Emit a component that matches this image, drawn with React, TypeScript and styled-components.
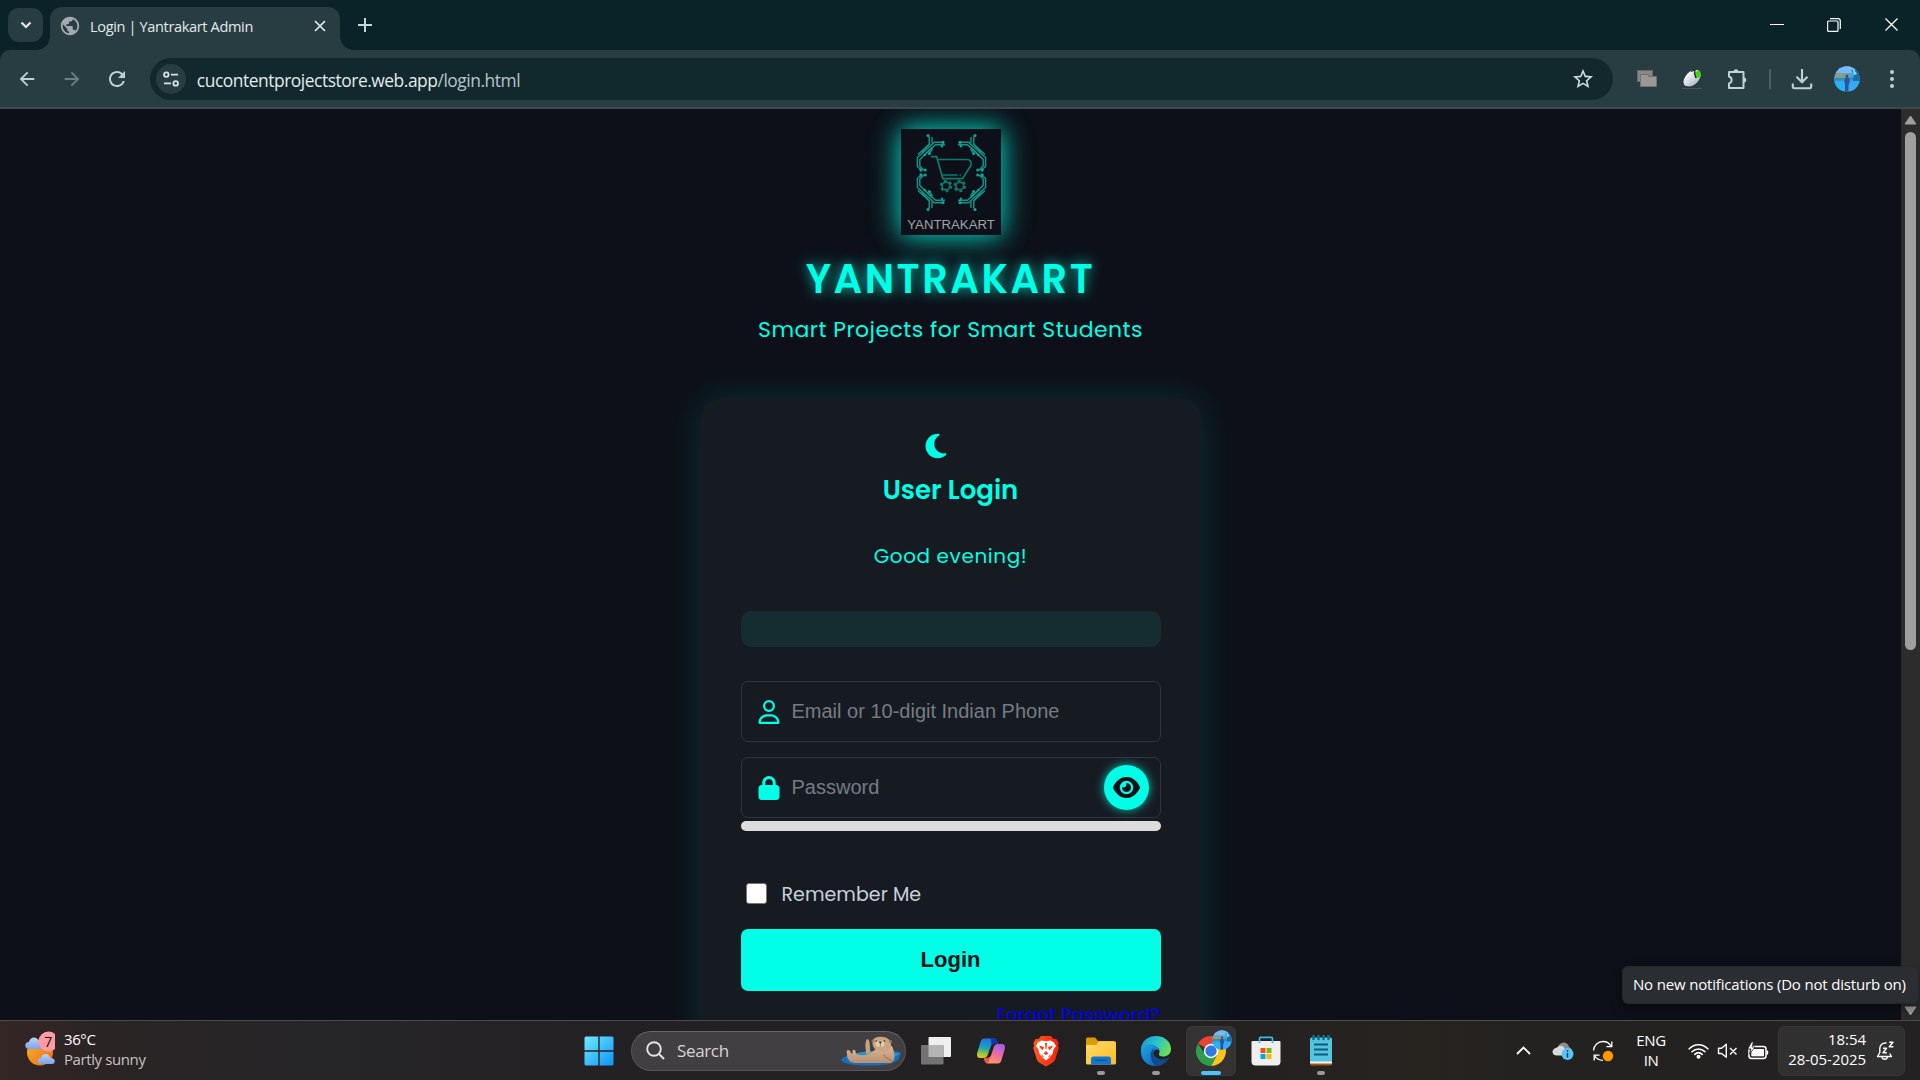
import React from 'react';
import styled, { createGlobalStyle, css } from 'styled-components';
import { FaMoon, FaRegUser, FaLock, FaEye } from 'react-icons/fa6';
import {
  MdArrowBack,
  MdArrowForward,
  MdRefresh,
  MdStarOutline,
  MdPublic,
} from 'react-icons/md';

const neon = '#00ffe7';
const uiFont = '"Segoe UI", "Open Sans", "Noto Sans", sans-serif';
const brandFont = 'Poppins, Inter, "Noto Sans", sans-serif';

const GlobalStyle = createGlobalStyle`
  *, *::before, *::after { box-sizing: border-box; }
  html, body { margin: 0; padding: 0; background: #0d1018; overflow: hidden; }
  svg { display: block; }
`;

const Screen = styled.div`
  width: 1920px;
  height: 1080px;
  display: flex;
  flex-direction: column;
  overflow: hidden;
  font-family: ${uiFont};
  color: #fff;
`;

/* ---------- Browser chrome ---------- */

const TabStrip = styled.header`
  height: 50px;
  flex: none;
  display: flex;
  background: #0a2328;
`;

const TabSearch = styled.button`
  width: 35px;
  height: 34px;
  margin: 8px 7px 0 8px;
  padding: 0;
  border: 0;
  border-radius: 11px;
  background: #283d41;
  display: grid;
  place-items: center;
`;

const Tab = styled.div`
  position: relative;
  width: 290px;
  height: 43px;
  margin-top: 7px;
  padding: 0 14px 6px 9px;
  display: flex;
  align-items: center;
  border-radius: 12px 12px 0 0;
  background: #283d41;

  &::before,
  &::after {
    content: '';
    position: absolute;
    bottom: 0;
    width: 13px;
    height: 13px;
  }
  &::before {
    left: -13px;
    background: radial-gradient(circle at 0 0, transparent 12.5px, #283d41 13px);
  }
  &::after {
    right: -13px;
    background: radial-gradient(circle at 100% 0, transparent 12.5px, #283d41 13px);
  }
`;

const TabTitle = styled.span`
  flex: 1;
  margin-left: 9px;
  font-size: 14.6px;
  letter-spacing: -0.38px;
  line-height: 20px;
  color: #e3e9ea;
  white-space: nowrap;
`;

const NewTab = styled.div`
  margin: 18px 0 0 18px;
`;

const WindowControls = styled.div`
  margin-left: auto;
  display: flex;
`;

const WindowControl = styled.div`
  width: 57px;
  height: 49px;
  padding-right: 1px;
  display: grid;
  place-items: center;
`;

const ToolbarBack = styled.div`
  flex: none;
  background: #0a2328;
`;

const Toolbar = styled.div`
  height: 59px;
  padding-left: 5px;
  padding-right: 6px;
  display: flex;
  align-items: center;
  border-bottom: 2px solid #3e4849;
  border-radius: 10px 10px 0 0;
  background: #283d41;
`;

const NavButton = styled.div<{ $dim?: boolean }>`
  width: 45px;
  height: 42px;
  display: grid;
  place-items: center;
  color: ${(p) => (p.$dim ? '#6c8083' : '#bcd3d5')};
`;

const Omnibox = styled.div`
  width: 1465px;
  height: 42px;
  margin-left: 10px;
  margin-right: 11px;
  padding: 0 18px 0 6px;
  display: flex;
  align-items: center;
  border-radius: 21px;
  background: #11282c;
  color: #d5dcdd;
`;

const SiteInfo = styled.div`
  width: 30px;
  height: 30px;
  border-radius: 50%;
  background: #283d41;
  display: grid;
  place-items: center;
`;

const Url = styled.div`
  flex: 1;
  margin-left: 11px;
  padding-top: 2px;
  font-size: 17.4px;
  letter-spacing: -0.46px;
  line-height: 24px;
  color: #e4ebec;
  white-space: nowrap;
`;

const UrlPath = styled.span`
  color: #b9c6c8;
`;

const Divider = styled.div`
  width: 2px;
  height: 20px;
  margin: 0 8px 0 10px;
  background: #4a5f63;
`;

/* ---------- Page ---------- */

const Viewport = styled.div`
  height: 911px;
  flex: none;
  display: flex;
  overflow: hidden;
  background: #0d1018;
`;

const Page = styled.main`
  flex: 1;
  padding-top: 20px;
  display: flex;
  flex-direction: column;
  align-items: center;
  overflow: hidden;
  font-family: ${brandFont};
`;

const LogoFrame = styled.div`
  width: 100px;
  height: 106px;
  flex: none;
  background: #0d1018;
  box-shadow: 0 0 37px rgba(0, 255, 231, 0.27), 0 0 24px rgba(0, 255, 231, 0.78);
`;

const Brand = styled.h1`
  margin: 14px 0 0;
  font-size: 40px;
  line-height: 61px;
  font-weight: 600;
  letter-spacing: 2.5px;
  color: ${neon};
  text-shadow: 0 0 13px rgba(0, 255, 231, 0.8);
`;

const Tagline = styled.p`
  margin: 3px 0 0;
  font-size: 22px;
  line-height: 33px;
  letter-spacing: 0.44px;
  color: ${neon};
`;

const Card = styled.section`
  width: 500px;
  height: 760px;
  flex: none;
  margin-top: 53px;
  padding: 33px 40px 0;
  display: flex;
  flex-direction: column;
  border-radius: 20px;
  background: #161b22;
  box-shadow: 0 0 38px rgba(0, 255, 231, 0.13);
`;

const MoonRow = styled.div`
  height: 28px;
  padding-left: 181px;
  color: ${neon};
`;

const CardTitle = styled.h2`
  margin: 11px 0 0;
  font-size: 26px;
  line-height: 39px;
  font-weight: 600;
  letter-spacing: 0;
  text-align: center;
  color: ${neon};
`;

const Greeting = styled.p`
  margin: 31px 0 0;
  font-size: 20px;
  line-height: 30px;
  letter-spacing: 0.58px;
  text-align: center;
  color: ${neon};
`;

const Notice = styled.div`
  height: 36px;
  margin-top: 40px;
  border-radius: 10px;
  background: #152c30;
`;

const Field = styled.div<{ $gap: number }>`
  height: 61px;
  flex: none;
  margin-top: ${(p) => p.$gap}px;
  padding: 0 11px 0 15px;
  display: flex;
  align-items: center;
  gap: 11px;
  border: 1px solid #30363d;
  border-radius: 7px;
  color: ${neon};
`;

const Placeholder = styled.span`
  flex: 1;
  font-family: Arial, "Liberation Sans", sans-serif;
  font-size: 20px;
  line-height: 24px;
  color: #767b82;
  padding-bottom: 1px;
`;

const EyeButton = styled.button`
  width: 45px;
  height: 45px;
  flex: none;
  padding: 0;
  border: 0;
  border-radius: 50%;
  display: grid;
  place-items: center;
  color: #0d1117;
  background: ${neon};
  box-shadow: 0 0 10px rgba(0, 255, 231, 0.75);
`;

const Strength = styled.div`
  height: 10px;
  flex: none;
  margin-top: 3px;
  border-radius: 5px;
  background: #dddddd;
`;

const Remember = styled.label`
  height: 28px;
  margin-top: 50px;
  padding-left: 5px;
  display: flex;
  align-items: center;
  font-size: 19px;
  line-height: 28px;
  letter-spacing: 0.04px;
  color: #c9d1d9;
`;

const CheckBox = styled.span`
  width: 21px;
  height: 21px;
  margin-right: 15px;
  margin-bottom: 3px;
  border: 1px solid #767676;
  border-radius: 3px;
  background: #fff;
`;

const LoginButton = styled.button`
  height: 62px;
  flex: none;
  margin-top: 20px;
  padding: 0;
  border: 0;
  border-radius: 7px;
  background: ${neon};
  color: #0d1117;
  font: 700 22px/60px Arial, "Liberation Sans", sans-serif;
`;

const Forgot = styled.a`
  align-self: flex-end;
  margin-top: 10px;
  font-size: 18.6px;
  line-height: 28px;
  color: #0000ee;
`;

const Scrollbar = styled.div`
  width: 19px;
  padding: 6px 0 4px;
  display: flex;
  flex-direction: column;
  align-items: center;
  background: #2c2c2c;
`;

const Thumb = styled.div`
  width: 11px;
  height: 518px;
  margin-top: 7px;
  margin-bottom: auto;
  border-radius: 6px;
  background: #9f9f9f;
`;

/* ---------- Taskbar ---------- */

const Taskbar = styled.footer`
  height: 60px;
  flex: none;
  display: flex;
  align-items: center;
  border-top: 1px solid #4b4a4a;
  background: linear-gradient(90deg, #332625 0, #2a2424 110px, #262527 300px, #232124 620px, #232021 1200px, #27231f 1420px, #232220 1530px, #242122 1920px);
`;

const Weather = styled.div`
  width: 571px;
  padding-left: 25px;
  padding-bottom: 4px;
  display: flex;
  align-items: center;
`;

const WeatherText = styled.div`
  margin-left: 9px;
  display: flex;
  flex-direction: column;
  font-size: 15px;
  line-height: 20px;
  letter-spacing: -0.4px;
`;

const Muted = styled.span`
  color: #c6c3c3;
`;

const Slot = styled.div<{ $w?: number }>`
  position: relative;
  width: ${(p) => p.$w ?? 55}px;
  height: 50px;
  flex: none;
  display: grid;
  place-items: center;
`;

const ActiveTile = styled.div`
  width: 50px;
  height: 50px;
  display: grid;
  place-items: center;
  border: 1px solid #3a3839;
  border-radius: 6px;
  background: #343233;
`;

const Indicator = styled.i<{ $active?: boolean }>`
  position: absolute;
  bottom: 1px;
  left: 50%;
  height: 4px;
  border-radius: 2px;
  ${(p) =>
    p.$active
      ? css`
          width: 20px;
          margin-left: -10px;
          background: #4cc2ff;
        `
      : css`
          width: 8px;
          margin-left: -4px;
          background: #9a9999;
        `}
`;

const SearchBox = styled.div`
  width: 275px;
  height: 40px;
  margin: 0 2px 0 5px;
  padding: 0 4px 0 14px;
  display: flex;
  align-items: center;
  border: 1px solid #575556;
  border-top-color: #676566;
  border-radius: 20px;
  background: #413f41;
`;

const SearchText = styled.span`
  flex: 1;
  margin-left: 12px;
  font-size: 17px;
  letter-spacing: -0.35px;
  line-height: 24px;
  color: #d6d5d5;
`;

const Tray = styled.div`
  margin-left: auto;
  padding-right: 15px;
  display: flex;
  align-items: center;
`;

const Language = styled.div`
  width: 56px;
  padding-bottom: 2px;
  display: flex;
  flex-direction: column;
  align-items: center;
  font-size: 15px;
  line-height: 20px;
  letter-spacing: -0.4px;
`;

const ClockPanel = styled.div`
  width: 127px;
  height: 50px;
  padding-right: 9px;
  display: flex;
  align-items: center;
  justify-content: flex-end;
  gap: 10px;
  border: 1px solid #373536;
  border-radius: 6px;
  background: #313030;
`;

const ClockText = styled.div`
  padding-bottom: 4px;
  display: flex;
  flex-direction: column;
  align-items: flex-end;
  font-size: 15px;
  line-height: 20px;
  letter-spacing: -0.05px;
`;

const Tooltip = styled.div`
  position: absolute;
  left: 1622px;
  top: 966px;
  width: 297px;
  height: 38px;
  padding-left: 10px;
  border: 1px solid #24282d;
  border-radius: 6px;
  background: #2a2d32;
  box-shadow: 0 5px 12px rgba(0, 0, 0, 0.35);
  font-size: 15px;
  line-height: 35px;
  letter-spacing: -0.17px;
  white-space: nowrap;
`;

/* ---------- Drawings ---------- */

const CircuitCorner = () => (
  <g fill="none" strokeWidth="1.4">
    <path d="M43 13.2H33.5L16.4 28.600V37.500L20.500 41.300" />
    <path d="M44 15.800H34.500L18.800 30.500V37L23 41" />
    <path d="M27 6.500L28.200 8.500V15.200L17 25.500" />
    <path d="M31 8V14.500M28.400 15L20.500 23.500M31 18.500L24 25.500M31.500 20L28.500 24" />
    <g fill="#0fa699" stroke="none">
      <circle cx="27" cy="6.500" r="1.500" />
      <circle cx="42" cy="13.400" r="1.600" />
      <circle cx="41" cy="17.300" r="1.200" />
      <circle cx="20" cy="41" r="1.700" />
      <circle cx="24.300" cy="41" r="1.500" />
      <circle cx="28.400" cy="24.600" r="1.500" />
      <circle cx="23.600" cy="26" r="1.300" />
    </g>
  </g>
);

const LogoArt = () => (
  <svg width="100" height="106" viewBox="0 0 100 106">
    <g stroke="#0d9a8d">
      <CircuitCorner />
      <g transform="translate(101 0) scale(-1 1)"><CircuitCorner /></g>
      <g transform="translate(0 87) scale(1 -1)"><CircuitCorner /></g>
      <g transform="translate(101 87) scale(-1 -1)"><CircuitCorner /></g>
    </g>
    <g fill="none" stroke="#0b7b6e" strokeWidth="1.7">
      <path d="M30 27.600H35.600L41.800 49.600H61.500L69.600 37C71.500 33 69 30.500 66 30.500H36.800" />
      <path d="M41.500 46H56.500M58.500 46H60" />
      <circle cx="45" cy="57" r="3.900" />
      <circle cx="58.800" cy="57" r="3.900" />
      <g strokeWidth="2">
        <circle cx="45" cy="57" r="5.300" strokeDasharray="2.900 2.650" />
        <circle cx="58.800" cy="57" r="5.300" strokeDasharray="2.900 2.650" />
      </g>
    </g>
    <text x="6.300" y="99.500" textLength="87.500" lengthAdjust="spacingAndGlyphs" fontFamily="Liberation Sans, Arial, sans-serif" fontSize="13.600" fill="#a0a2a5">
      YANTRAKART
    </text>
  </svg>
);

const TuneIcon = () => (
  <svg width="18" height="18" viewBox="0 0 18 18" fill="none" stroke="#d5e2e3" strokeWidth="1.8">
    <circle cx="4.3" cy="4.6" r="2.3" />
    <path d="M9 4.6H16M2 13.4H9" />
    <circle cx="13.7" cy="13.4" r="2.3" />
  </svg>
);

const LayersIcon = () => (
  <svg width="20" height="18" viewBox="0 0 20 18">
    <path d="M0.5 0.5H15.5V11.5H0.5Z" fill="#8a8686" stroke="#6b6868" />
    <path d="M3.5 7.5V16.5H19.5V6.5H11.5V4.5H3.5Z" fill="#9c9797" stroke="#757070" />
  </svg>
);

const MouseIcon = () => (
  <svg width="22" height="22" viewBox="0 0 22 22">
    <defs>
      <linearGradient id="mouseBody" x1="0" y1="0" x2="1" y2="1">
        <stop offset="0.2" stopColor="#fff" />
        <stop offset="1" stopColor="#93a0ad" />
      </linearGradient>
    </defs>
    <path d="M3 10C6 4 11 1 15 1.3C19 1.6 21 5 20 8.5C18.5 14 13 19 8 19C2.5 19 .5 15 3 10Z" fill="url(#mouseBody)" stroke="#222b2e" />
    <path d="M13 5L17 2.500C20 4 20.500 6.500 19.500 9L15 10Z" fill="#3ed40a" />
    <path d="M10 3.500L14 2L13.500 5.500L15 10" fill="none" stroke="#1b2423" strokeWidth="1.3" />
    <path d="M1 20.500H21" stroke="#42575a" />
  </svg>
);

const PuzzleIcon = () => (
  <svg width="22" height="22" viewBox="0 0 22 22" fill="none" stroke="#bcd3d5" strokeWidth="2" strokeLinejoin="round">
    <path d="M3 4H17.500V20H3V15.500C6.500 14.500 6.500 9.500 3 8.500Z" />
    <path d="M7.500 3.500C7.500 .6 12.500 .6 12.500 3.500ZM18 9.500C21 9.500 21 14.500 18 14.500Z" fill="#bcd3d5" stroke="none" />
  </svg>
);

const DownloadIcon = () => (
  <svg width="22" height="22" viewBox="0 0 22 22" fill="none" stroke="#bcd3d5" strokeWidth="2.1">
    <path d="M11 1V14M5.500 8.800L11 14.300L16.500 8.800M1.800 15.500V19Q1.800 20.300 3.200 20.300H18.800Q20.200 20.300 20.200 19V15.500" />
  </svg>
);

const AvatarArt = ({ size }: { size: number }) => (
  <svg width={size} height={size} viewBox="0 0 26 26">
    <defs>
      <clipPath id={`face${size}`}><circle cx="13" cy="13" r="12.800" /></clipPath>
    </defs>
    <g clipPath={`url(#face${size})`}>
      <path d="M0 0H26V26H0Z" fill="#38a9f4" />
      <path d="M0 0H18V7H0Z" fill="#79baf5" />
      <path d="M1 9L6 6L9 9L13 7L16 10V14H0Z" fill="#8da07c" />
      <path d="M0 12L26 11V14L0 15Z" fill="#2a8fc4" />
      <path d="M17 4L20 8L19 15H26V5Z" fill="#1b6da6" />
      <path d="M18 1L23 8L20 9Z" fill="#9cd5fa" />
      <path d="M0 16L10 17L8 26H0Z" fill="#21b5f1" />
      <path d="M11.500 11.500H14.500L16 15L14.500 19V26H11V18L10 15Z" fill="#2b559a" />
      <circle cx="13" cy="10" r="1.500" fill="#51444b" />
    </g>
  </svg>
);

const WeatherIcon = () => (
  <svg width="30" height="36" viewBox="0 0 30 36">
    <defs>
      <linearGradient id="sun" x1="0" y1="0" x2="1" y2="1">
        <stop offset="0" stopColor="#f6b52c" /><stop offset="1" stopColor="#ee6a10" />
      </linearGradient>
      <linearGradient id="cloud" x1="0" y1="0" x2="0" y2="1">
        <stop offset="0" stopColor="#b9d2fb" /><stop offset="1" stopColor="#7ba2ea" />
      </linearGradient>
    </defs>
    <circle cx="15" cy="21.500" r="13" fill="url(#sun)" />
    <path d="M4 18C-1 18-1 11 4 11C5 5 13 5 14 11L18 18Z" fill="url(#cloud)" />
    <path d="M16 33C11.500 33 12 27 16 27C17 21.500 24.500 22 25 27C31 26.500 31 33 27 33Z" fill="url(#cloud)" />
    <circle cx="23.500" cy="10.500" r="10" fill="#ff99a4" />
    <text x="27.300" y="15.700" textAnchor="end" fontFamily="Open Sans, sans-serif" fontSize="14" fill="#111">7</text>
  </svg>
);

const OverflowIcon = styled.div`
  svg { overflow: visible; }
`;

const WindowsIcon = () => (
  <svg width="30" height="30" viewBox="0 0 30 30">
    <defs>
      <linearGradient id="win" x1="0" y1="0" x2="1" y2="1">
        <stop offset="0" stopColor="#72eafd" /><stop offset="1" stopColor="#0a93f8" />
      </linearGradient>
    </defs>
    <path fill="url(#win)" d="M.5 2Q.5.5 2 .5H14.300V14.300H.5ZM15.700.5H28Q29.500.5 29.500 2V14.300H15.700ZM.5 15.700H14.300V29.500H2Q.5 29.500.5 28ZM15.700 15.700H29.500V28Q29.500 29.500 28 29.500H15.700Z" />
  </svg>
);

const OtterArt = () => (
  <svg width="60" height="30" viewBox="0 0 60 30">
    <defs>
      <linearGradient id="fur" x1="0" y1="0" x2="0" y2="1">
        <stop offset="0" stopColor="#dcb996" /><stop offset="1" stopColor="#b88f71" />
      </linearGradient>
    </defs>
    <path d="M0 24C6 15 50 12 60 17C58 26 52 29.500 30 29.500C12 29.500 3 28 0 24Z" fill="#1270bd" />
    <path d="M5 21C20 13 45 14 59 17.500L50 23H8Z" fill="#2c93c4" />
    <path d="M6 18C4.500 13 8.500 12.500 10 17L11.500 18C10.500 12.500 15 12 15 18C22 20.500 27 19 32 15.500L36 12L51 10C54 17 55 25 50 27H14C9 27 6 23 6 18Z" fill="url(#fur)" />
    <path d="M25.500 18C24.500 13 23.500 6 26 3.200C29.500 2.500 28.500 11 29.500 17Z" fill="#c8a381" />
    <path d="M31.500 7C31.500 2 35 .7 40 .7C45.500 .7 49.500 3.500 50 8C50 13 47 16 41 15.500C35 15 31.500 12 31.500 7Z" fill="#cba581" />
    <circle cx="32" cy="5" r="1.500" fill="#a27e66" /><circle cx="49.500" cy="5.500" r="1.500" fill="#a27e66" />
    <ellipse cx="39" cy="7.800" rx="4.500" ry="3.200" fill="#e6caab" />
    <path d="M37.500 5.500H41L39.300 8Z" fill="#3a2a2d" />
    <circle cx="35.300" cy="5" r=".8" fill="#2b2024" /><circle cx="43.500" cy="5" r=".8" fill="#2b2024" />
    <path d="M39.300 8V10.500M44 18.500C42 19.500 43 21 46 22C48.500 23 50 25 52 26" fill="none" stroke="#8b6a5c" strokeWidth=".9" />
  </svg>
);

const TaskViewIcon = () => (
  <svg width="30" height="30" viewBox="0 0 30 30">
    <rect x="7.500" y="1" width="22.500" height="20" rx="1" fill="#efefef" />
    <rect x="0" y="9" width="22.500" height="19.500" rx="1" fill="#737373" />
    <path d="M7.500 9H22.500V21H7.500Z" fill="#b4b4b4" />
  </svg>
);

const CopilotIcon = () => (
  <svg width="30" height="28" viewBox="0 0 30 28">
    <defs>
      <linearGradient id="coA" x1=".4" y1="0" x2=".2" y2="1">
        <stop offset="0" stopColor="#1c74e8" /><stop offset=".5" stopColor="#21a5b5" /><stop offset=".75" stopColor="#8bc83c" /><stop offset="1" stopColor="#f8c31c" />
      </linearGradient>
      <linearGradient id="coB" x1=".8" y1="0" x2=".3" y2="1">
        <stop offset="0" stopColor="#a55cf0" /><stop offset=".5" stopColor="#ee6aa5" /><stop offset="1" stopColor="#ff9c54" />
      </linearGradient>
    </defs>
    <path d="M8 1.500H18C20 1.500 21 3 21.500 5L22 7H18C16 7 15 8 14.500 10L12 17C11 20 10 21 7 21H4C1 21 .5 18 1.500 15L4.500 5C5.200 2.800 6 1.500 8 1.500Z" fill="url(#coA)" />
    <path d="M22 26.500H12C10 26.500 9 25 8.500 23L8 21H11C13.500 21 14.500 20 15.200 18L17.500 11C18.500 8 19.500 7 22 7H26C29 7 29.500 10 28.500 13L25.500 23C24.800 25.200 24 26.500 22 26.500Z" fill="url(#coB)" />
    <path d="M15 1.500H18C20 1.500 21 3 21.500 5L22 7H18C17 7 16.200 7.500 15.600 8.300Z" fill="#15359c" />
    <path d="M8 21H11C13 21 14 20.300 14.800 19L12 26.500C10 26.500 9 25 8.500 23Z" fill="#ef5350" />
  </svg>
);

const BraveIcon = () => (
  <svg width="28" height="32" viewBox="0 0 28 32">
    <defs>
      <linearGradient id="brave" x1="0" y1="0" x2="1" y2="0">
        <stop offset="0" stopColor="#ff5a1f" /><stop offset="1" stopColor="#f8200c" />
      </linearGradient>
    </defs>
    <path d="M9 1H19L21.500 4L24.500 4L26.500 8L26 11L26.800 13L23 25Q22 27 20 28L14 31.500L8 28Q6 27 5 25L1.200 13L2 11L1.500 8L3.500 4L6.500 4Z" fill="url(#brave)" />
    <path d="M9.500 5.500L14 6.200L18.500 5.500L22 7.500L24 11L21.500 14.500L20.500 19L17.500 22.500L14 25.500L10.500 22.500L7.500 19L6.500 14.500L4 11L6 7.500Z" fill="#fff" />
    <path d="M7 10.500L12 12L11 15L9 14ZM21 10.500L16 12L17 15L19 14ZM14 16L16.500 18.500L14 20L11.500 18.500ZM9 19L12 21.500L10.500 22ZM19 19L16 21.500L17.500 22ZM13 8H15L14.500 14H13.500Z" fill="#f83a18" />
  </svg>
);

const FolderIcon = () => (
  <svg width="30" height="28" viewBox="0 0 30 28">
    <defs>
      <linearGradient id="folder" x1="0" y1="0" x2="1" y2="1">
        <stop offset="0" stopColor="#ffdb6b" /><stop offset="1" stopColor="#fcbb24" />
      </linearGradient>
    </defs>
    <path d="M0 2Q0 .5 1.500.5H9L12 4H28V12H0Z" fill="#dc9a08" />
    <path d="M0 8H10L13 4.200H28.500Q30 4.200 30 5.700V26Q30 27.500 28.500 27.500H1.500Q0 27.500 0 26Z" fill="url(#folder)" />
    <path d="M5 27.500V22Q5 19.500 7.500 19.500H22.500Q25 19.500 25 22V27.500Z" fill="#1277d0" />
    <path d="M9 23.300H21" stroke="#0a4c97" strokeWidth="1.300" />
  </svg>
);

const EdgeIcon = () => (
  <svg width="30" height="30" viewBox="0 0 30 30">
    <defs>
      <linearGradient id="edgeTop" x1="0" y1=".2" x2="1" y2=".6">
        <stop offset="0" stopColor="#1b98d8" /><stop offset=".5" stopColor="#2ac3c9" /><stop offset="1" stopColor="#6fe04f" />
      </linearGradient>
      <linearGradient id="edgeSide" x1="0" y1="0" x2="1" y2="1">
        <stop offset="0" stopColor="#1ba7e3" /><stop offset="1" stopColor="#0b59b8" />
      </linearGradient>
    </defs>
    <path d="M0 14C0 6 6 0 15 0C24 0 30 6 30 13C30 18 26 20.500 22 20.500C19 20.500 17.500 19.500 18 18C20 14 17 10 11 10C5 10 1 13 0 18Z" fill="url(#edgeTop)" />
    <path d="M0 16C0 11 5 8 10 8.500C15 9 18 12 18.500 15C16 12 12 14 12 18C12 24 18 27 24 25C21 28.500 18 30 15 30C6 30 0 24 0 16Z" fill="url(#edgeSide)" />
    <path d="M10.500 15C8 20 11 29.500 16 30C21 30 26 26 28.500 21.500C22 25 14 23.500 12.300 17C11.800 15 12.500 13.500 14 12.500C12.500 12.500 11.300 13.500 10.500 15Z" fill="#114a8c" />
  </svg>
);

const ChromeIcon = () => (
  <OverflowIcon>
    <svg width="30" height="30" viewBox="0 0 30 30">
      <path d="M15 15L2 7.500A15 15 0 0 1 28 7.500Z" fill="#ea4335" />
      <path d="M15 8H28.300A15 15 0 0 1 15 30L21.200 18.500Z" fill="#fcc31e" />
      <path d="M2 7.500L9 18.500L15 22L21.200 18.500L15 30A15 15 0 0 1 2 7.500Z" fill="#2b9f4b" />
      <circle cx="15" cy="15" r="7.200" fill="#fff" />
      <circle cx="15" cy="15" r="5.700" fill="#3578e5" />
      <g transform="translate(16 -6)"><AvatarArt size={20} /></g>
    </svg>
  </OverflowIcon>
);

const StoreIcon = () => (
  <svg width="30" height="30" viewBox="0 0 30 30">
    <path d="M.5 6Q.5 5 1.500 5H28.500Q29.500 5 29.500 6V25.500Q29.500 29.500 25.500 29.500H4.500Q.5 29.500.5 25.500Z" fill="#efefef" />
    <path d="M8.500 7V2.500Q8.500 1.300 9.700 1.300H20.300Q21.500 1.300 21.500 2.500V7" fill="none" stroke="#35bdf0" strokeWidth="1.700" />
    <path d="M9.500 12H14.500V17H9.500Z" fill="#f15022" /><path d="M15.500 12H20.500V17H15.500Z" fill="#7fba00" />
    <path d="M9.500 18H14.500V23H9.500Z" fill="#00a4ef" /><path d="M15.500 18H20.500V23H15.500Z" fill="#ffb901" />
  </svg>
);

const NotepadIcon = () => (
  <svg width="24" height="31" viewBox="0 0 24 31">
    <path d="M1 25H23V29Q23 30.500 21.500 30.500H2.500Q1 30.500 1 29Z" fill="#a6541b" />
    <path d="M1 25H23V28.500H1Z" fill="#f4f4f4" />
    <path d="M1 4Q1 2.500 2.500 2.500H21.500Q23 2.500 23 4V26.500H1Z" fill="#58c3de" />
    <path d="M5 9.500H19M5 14.500H19M5 19.500H19" stroke="#075e7e" strokeWidth="2" />
    <path d="M4.500 1V4M9.500 1V4M14.500 1V4M19.500 1V4" stroke="#0e6d92" strokeWidth="2.600" strokeLinecap="round" />
  </svg>
);

const CloudIcon = () => (
  <svg width="22" height="20" viewBox="0 0 22 20">
    <path d="M6 6C8 0 16 0 17 6Q20 7 20 11H10Z" fill="#8c8c8c" />
    <path d="M5 14.500C-1 14.500-1 7.500 5 6.500C8 3 12 5 13 8L19 12V14.500Z" fill="#d9d9d9" />
    <circle cx="15.500" cy="13" r="6" fill="#55c5fb" />
    <path d="M15.500 12V16.500M15.500 9.300V10.800" stroke="#12324a" strokeWidth="1.400" />
  </svg>
);

const SyncIcon = () => (
  <svg width="22" height="22" viewBox="0 0 22 22" fill="none" stroke="#fff" strokeWidth="1.300">
    <path d="M1.500 10.500C2 5 6 1.500 11 1.500C14.500 1.500 17.500 3.300 19 6.300M19.800 1.500V6.700H14.500" />
    <path d="M2.200 20.500V15.200H7.500M2.500 15.500C4 18.500 7 20.300 11 20.300" />
    <circle cx="16" cy="16" r="5.200" fill="#ff9800" stroke="none" />
  </svg>
);

const WifiIcon = () => (
  <svg width="21" height="16" viewBox="0 0 21 16" fill="none" stroke="#fff" strokeWidth="1.600" strokeLinecap="round">
    <path d="M1.200 5.800C6.500.3 14.500.3 19.800 5.800M4 8.700C7.800 5 13.200 5 17 8.700M6.800 11.400C9 9.300 12 9.300 14.200 11.400" />
    <circle cx="10.500" cy="13.700" r="1.200" fill="#fff" />
  </svg>
);

const MuteIcon = () => (
  <svg width="21" height="16" viewBox="0 0 21 16" fill="none" stroke="#fff" strokeWidth="1.400" strokeLinejoin="round">
    <path d="M1.500 5.200H4.500L9.300 1.200V14.300L4.500 10.500H1.500ZM13 5L19.500 11.500M19.500 5L13 11.500" />
  </svg>
);

const BatteryIcon = () => (
  <svg width="22" height="18" viewBox="0 0 22 18">
    <rect x="2" y="4.500" width="17" height="12" rx="2.500" fill="none" stroke="#fff" strokeWidth="1.500" />
    <path d="M4.300 7H17V14.300H4.300Z" fill="#fff" />
    <path d="M19.500 8Q21.300 8 21.300 10.500T19.500 13Z" fill="#fff" />
    <path d="M4.500 0L.8 7H4L2.500 12L8.200 5H5L6.500 0Z" fill="#fff" stroke="#232122" strokeWidth=".8" />
  </svg>
);

const BellIcon = () => (
  <svg width="19" height="20" viewBox="0 0 19 20" fill="none" stroke="#fff" strokeWidth="1.400" strokeLinejoin="round">
    <path d="M10.500 2C6 1.500 3.800 4.500 3.800 7.500V11.500L1.500 15.500H15.500L13.800 12.500" />
    <path d="M6 16C6.300 19 11 19 11.300 16" />
    <path d="M7 7.300H10.500L7 11.800H10.800M13.200 1.300H17L13.200 5.800H17.300" />
  </svg>
);

/* ---------- Sections ---------- */

const BrowserChrome = () => (
  <>
    <TabStrip>
      <TabSearch>
        <svg width="12" height="8" viewBox="0 0 12 8" fill="none" stroke="#e3e9ea" strokeWidth="2.200">
          <path d="M1.500 1.500L6 6L10.500 1.500" />
        </svg>
      </TabSearch>
      <Tab>
        <MdPublic size={22} color="#a5a8b0" />
        <TabTitle>Login | Yantrakart Admin</TabTitle>
        <svg width="12" height="12" viewBox="0 0 12 12" stroke="#e3e9ea" strokeWidth="1.700">
          <path d="M1 1L11 11M11 1L1 11" />
        </svg>
      </Tab>
      <NewTab>
        <svg width="14" height="14" viewBox="0 0 14 14" stroke="#c3d8da" strokeWidth="2">
          <path d="M7 0V14M0 7H14" />
        </svg>
      </NewTab>
      <WindowControls>
        <WindowControl>
          <svg width="14" height="14" viewBox="0 0 14 14" stroke="#fff"><path d="M0 6.500H14" /></svg>
        </WindowControl>
        <WindowControl>
          <svg width="14" height="14" viewBox="0 0 14 14" fill="none" stroke="#fff" strokeWidth="1.200">
            <rect x=".6" y="3" width="10.400" height="10.400" rx="1" />
            <path d="M3 .7H11Q13.300.7 13.300 3V11" />
          </svg>
        </WindowControl>
        <WindowControl>
          <svg width="13" height="13" viewBox="0 0 13 13" stroke="#fff" strokeWidth="1.300"><path d="M.5.5L12.500 12.500M12.500.5L.5 12.500" /></svg>
        </WindowControl>
      </WindowControls>
    </TabStrip>
    <ToolbarBack>
      <Toolbar>
        <NavButton><MdArrowBack size={22} /></NavButton>
        <NavButton $dim><MdArrowForward size={22} /></NavButton>
        <NavButton><MdRefresh size={24} /></NavButton>
        <Omnibox>
          <SiteInfo><TuneIcon /></SiteInfo>
          <Url>cucontentprojectstore.web.app<UrlPath>/login.html</UrlPath></Url>
          <MdStarOutline size={24} />
        </Omnibox>
        <NavButton><LayersIcon /></NavButton>
        <NavButton><MouseIcon /></NavButton>
        <NavButton><PuzzleIcon /></NavButton>
        <Divider />
        <NavButton><DownloadIcon /></NavButton>
        <NavButton><AvatarArt size={26} /></NavButton>
        <NavButton>
          <svg width="4" height="18" viewBox="0 0 4 18" fill="#bcd3d5">
            <circle cx="2" cy="2" r="2" /><circle cx="2" cy="9" r="2" /><circle cx="2" cy="16" r="2" />
          </svg>
        </NavButton>
      </Toolbar>
    </ToolbarBack>
  </>
);

const LoginPage = () => (
  <Viewport>
    <Page>
      <LogoFrame><LogoArt /></LogoFrame>
      <Brand>YANTRAKART</Brand>
      <Tagline>Smart Projects for Smart Students</Tagline>
      <Card>
        <MoonRow><FaMoon size={28} /></MoonRow>
        <CardTitle>User Login</CardTitle>
        <Greeting>Good evening!</Greeting>
        <Notice />
        <Field $gap={34}>
          <FaRegUser size={24} />
          <Placeholder>Email or 10-digit Indian Phone</Placeholder>
        </Field>
        <Field $gap={15}>
          <FaLock size={24} />
          <Placeholder>Password</Placeholder>
          <EyeButton><FaEye size={27} /></EyeButton>
        </Field>
        <Strength />
        <Remember><CheckBox />Remember Me</Remember>
        <LoginButton>Login</LoginButton>
        <Forgot>Forgot Password?</Forgot>
      </Card>
    </Page>
    <Scrollbar>
      <svg width="13" height="10" viewBox="0 0 13 10"><path d="M6.500 1L12 9H1Z" fill="#9f9f9f" stroke="#9f9f9f" strokeLinejoin="round" /></svg>
      <Thumb />
      <svg width="13" height="10" viewBox="0 0 13 10"><path d="M6.500 9L12 1H1Z" fill="#9f9f9f" stroke="#9f9f9f" strokeLinejoin="round" /></svg>
    </Scrollbar>
  </Viewport>
);

const WindowsTaskbar = () => (
  <Taskbar>
    <Weather>
      <WeatherIcon />
      <WeatherText>
        <span>36°C</span>
        <Muted>Partly sunny</Muted>
      </WeatherText>
    </Weather>
    <Slot><WindowsIcon /></Slot>
    <SearchBox>
      <svg width="19" height="19" viewBox="0 0 19 19" fill="none" stroke="#e4e4e4" strokeWidth="1.900" strokeLinecap="round">
        <circle cx="8" cy="8" r="6.800" /><path d="M13 13L17.500 17.500" />
      </svg>
      <SearchText>Search</SearchText>
      <OtterArt />
    </SearchBox>
    <Slot><TaskViewIcon /></Slot>
    <Slot><CopilotIcon /></Slot>
    <Slot><BraveIcon /></Slot>
    <Slot><FolderIcon /><Indicator /></Slot>
    <Slot><EdgeIcon /><Indicator /></Slot>
    <Slot><ActiveTile><ChromeIcon /></ActiveTile><Indicator $active /></Slot>
    <Slot><StoreIcon /></Slot>
    <Slot><NotepadIcon /><Indicator /></Slot>
    <Tray>
      <Slot $w={40}>
        <svg width="15" height="9" viewBox="0 0 15 9" fill="none" stroke="#fff" strokeWidth="1.800"><path d="M1 8L7.500 1.500L14 8" /></svg>
      </Slot>
      <Slot $w={40}><CloudIcon /></Slot>
      <Slot $w={40}><SyncIcon /></Slot>
      <Language><span>ENG</span><span>IN</span></Language>
      <Slot $w={38}><WifiIcon /></Slot>
      <Slot $w={21}><MuteIcon /></Slot>
      <Slot $w={40}><BatteryIcon /></Slot>
      <ClockPanel>
        <ClockText><span>18:54</span><span>28-05-2025</span></ClockText>
        <BellIcon />
      </ClockPanel>
    </Tray>
  </Taskbar>
);

export default function App() {
  return (
    <Screen>
      <GlobalStyle />
      <BrowserChrome />
      <LoginPage />
      <WindowsTaskbar />
      <Tooltip>No new notifications (Do not disturb on)</Tooltip>
    </Screen>
  );
}
